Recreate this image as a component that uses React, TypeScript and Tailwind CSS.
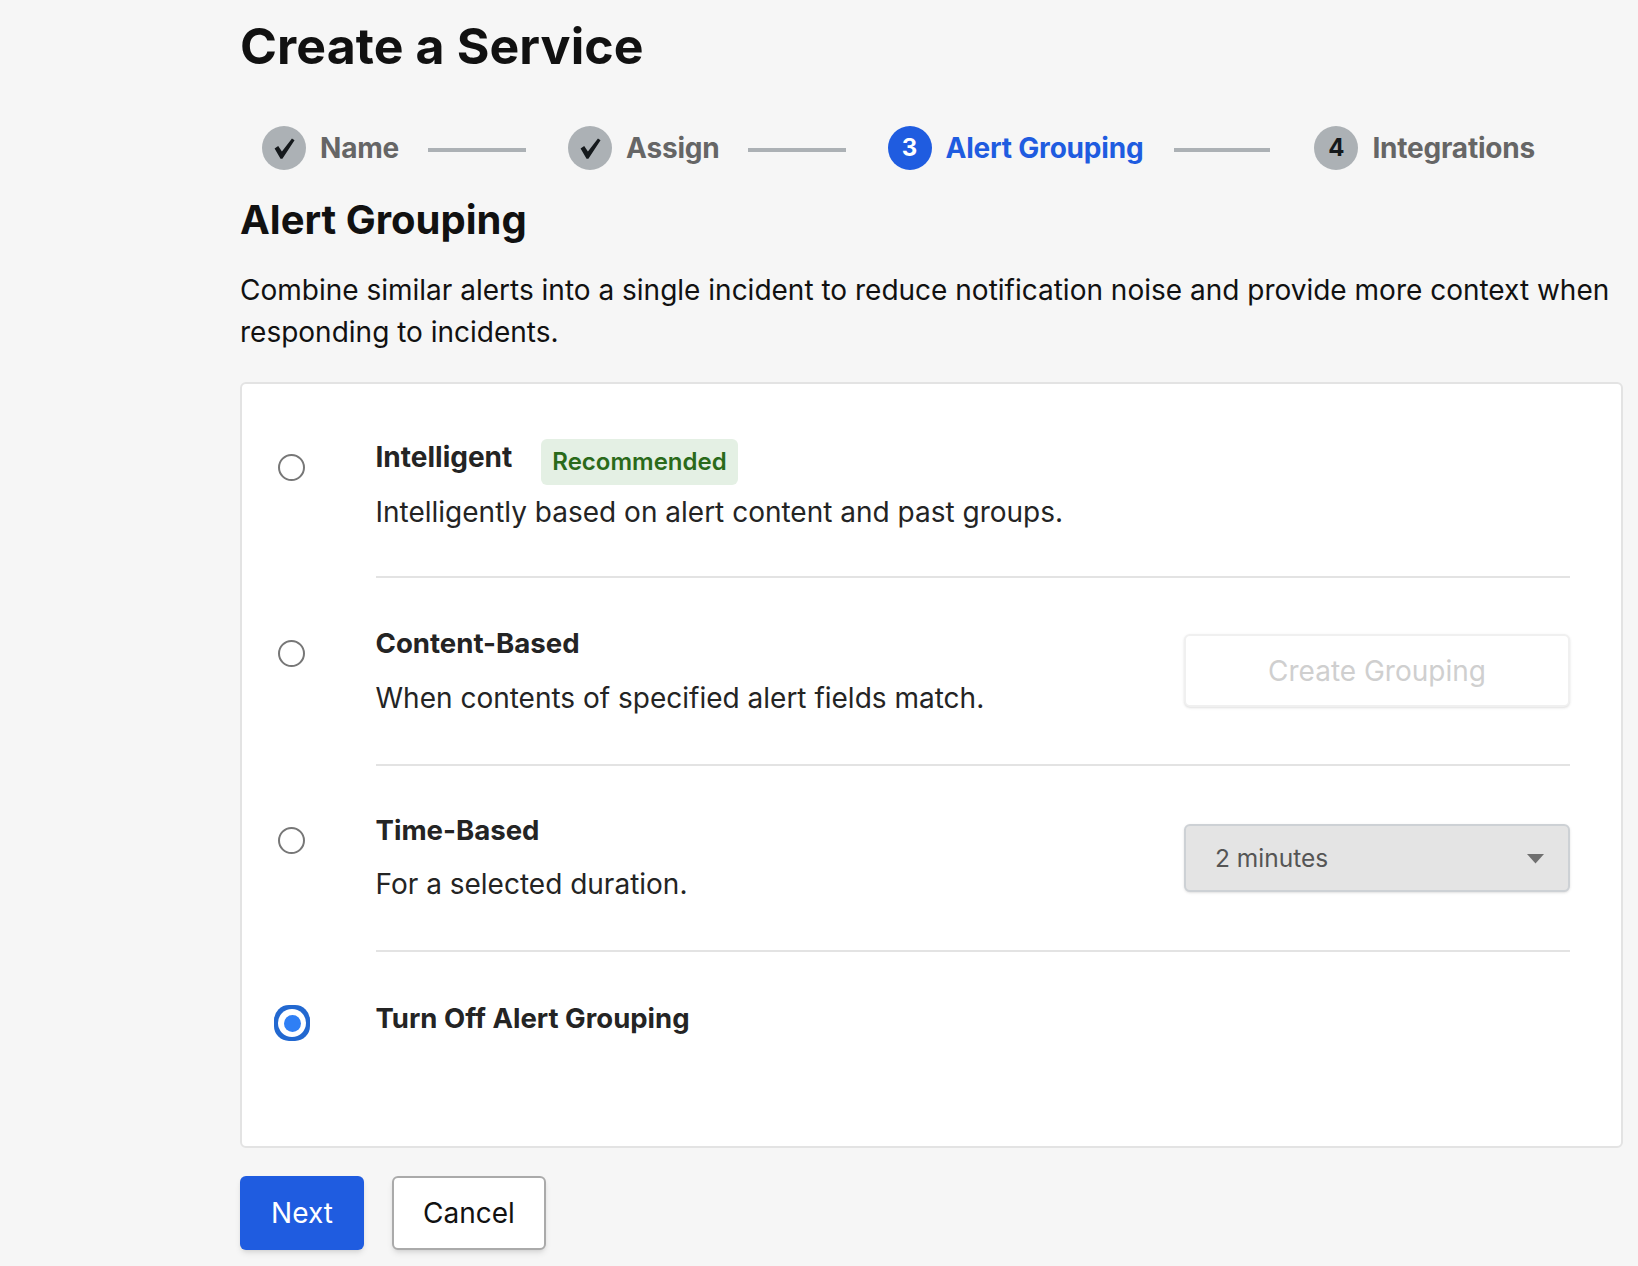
const font = "font-['Inter','Noto_Sans',sans-serif]";

const Tick = () => (
  <svg width="21" height="21" viewBox="3 3 18 18" fill="#15191c">
    <path d="M3.5 12 L6.6 9.8 L9.8 14.6 L18.4 3.5 L20.6 5 L10.2 20.8 L8.6 20.8 Z" />
  </svg>
);

const Step = ({ mark, label, active }: { mark: React.ReactNode; label: string; active?: boolean }) => (
  <div className="flex items-center gap-[14px]">
    <div
      className={`flex h-11 w-11 items-center justify-center rounded-full text-[24px] font-bold ${
        active ? "bg-[#1f5ce0] text-white" : "bg-[#acb1b5] text-[#15191c]"
      }`}
    >
      {mark}
    </div>
    <span className={`text-[28px] font-bold tracking-[-0.2px] ${active ? "text-[#1f5ce0]" : "text-[#666666]"}`}>{label}</span>
  </div>
);

const Line = ({ w }: { w: string }) => <div className={`mt-[4px] h-1 bg-[#acb1b5] ${w}`} />;

const Radio = () => (
  <div className="h-[27px] w-[27px] rounded-full border-2 border-[#777777] bg-white" />
);

const Row = ({
  top,
  height,
  radio,
  divider = true,
  children,
}: {
  top: string;
  height: string;
  radio: React.ReactNode;
  divider?: boolean;
  children: React.ReactNode;
}) => (
  <div className={`flex pl-[35px] pr-[51px] ${height}`}>
    <div className={`flex w-[98.5px] justify-start ${top}`}>{radio}</div>
    <div className={`flex flex-1 items-start justify-between ${divider ? "border-b-2 border-[#e3e3e3]" : ""}`}>
      {children}
    </div>
  </div>
);

export default function App() {
  return (
    <div className={`${font} min-h-[1266px] bg-[#f6f6f6] pl-[240px] pr-[15px] text-[#111111]`}>
      <h1 className="pt-[12px] text-[50px] leading-[68px] font-bold tracking-[0.1px]">Create a Service</h1>

      <div className="mt-[46px] flex items-center pl-[22px]">
        <Step mark={<Tick />} label="Name" />
        <Line w="ml-[29px] mr-[42px] w-[98px]" />
        <Step mark={<Tick />} label="Assign" />
        <Line w="ml-[28px] mr-[42px] w-[98px]" />
        <Step mark="3" label="Alert Grouping" active />
        <Line w="ml-[31px] mr-[44px] w-[96px]" />
        <Step mark="4" label="Integrations" />
      </div>

      <h2 className="mt-[24px] text-[40px] leading-[52px] font-bold">Alert Grouping</h2>
      <p className="mt-[23px] text-[28px] leading-[42px]">
        Combine similar alerts into a single incident to reduce notification noise and provide more context when
        responding to incidents.
      </p>

      <div className="mt-[29px] h-[766px] rounded-md border-2 border-[#e3e3e3] bg-white text-[#242424]">
        <Row top="pt-[70px] pl-[1px]" height="h-[194px]" radio={<Radio />}>
          <div className="pt-[55px]">
            <div className="flex items-start">
              <span className="text-[28px] leading-[36px] font-bold">Intelligent</span>
              <span className="ml-[29px] flex h-[46px] items-center rounded-md bg-[#e4f0e4] px-[11px] text-[24px] font-semibold text-[#2a6a1a]">
                Recommended
              </span>
            </div>
            <div className="mt-[7px] text-[28px] leading-[40px]">Intelligently based on alert content and past groups.</div>
          </div>
        </Row>

        <Row top="pt-[62px] pl-[1px]" height="h-[188px]" radio={<Radio />}>
          <div className="pt-[45px]">
            <div className="text-[27.6px] leading-[40px] font-bold">Content-Based</div>
            <div className="mt-[15px] text-[28px] leading-[40px]">When contents of specified alert fields match.</div>
          </div>
          <div className="mt-[56px] flex h-[73px] w-[386px] items-center justify-center rounded-md border-2 border-[#f0f0f0] bg-white text-[28px] text-[#cfcfcf] shadow-sm">
            Create Grouping
          </div>
        </Row>

        <Row top="pt-[61px] pl-[1px]" height="h-[186px]" radio={<Radio />}>
          <div className="pt-[44px]">
            <div className="text-[27.6px] leading-[40px] font-bold">Time-Based</div>
            <div className="mt-[14px] text-[28px] leading-[40px]">For a selected duration.</div>
          </div>
          <div className="mt-[58px] flex h-[68px] w-[386px] items-center justify-between rounded-md border-2 border-[#cdd1d5] bg-[#e4e4e4] pl-[29px] pr-[24px] text-[24.5px] text-[#555555] shadow-sm">
            2 minutes
            <svg width="17" height="11" viewBox="0 0 17 11" fill="#707070">
              <path d="M0 1 H17 L8.5 10.5 Z" />
            </svg>
          </div>
        </Row>

        <Row
          top="pt-[53px]"
          height="h-[191px]"
          divider={false}
          radio={
            <div className="-ml-[3px] flex h-9 w-9 items-center justify-center rounded-[15px] bg-[#2268d0]">
              <div className="flex h-7 w-7 items-center justify-center rounded-full bg-white">
                <div className="h-[17px] w-[17px] rounded-full bg-[#2f7ff5]" />
              </div>
            </div>
          }
        >
          <div className="pt-[46px] text-[27.5px] leading-[40px] font-bold">Turn Off Alert Grouping</div>
        </Row>
      </div>

      <div className="mt-[28px] flex gap-[28px] text-[28px]">
        <button className="h-[74px] w-[124px] rounded-md bg-[#1f5ce0] text-white shadow-md">Next</button>
        <button className="h-[74px] w-[154px] rounded-md border-2 border-[#aaaaaa] bg-white text-[#111111] shadow-md">
          Cancel
        </button>
      </div>
    </div>
  );
}
